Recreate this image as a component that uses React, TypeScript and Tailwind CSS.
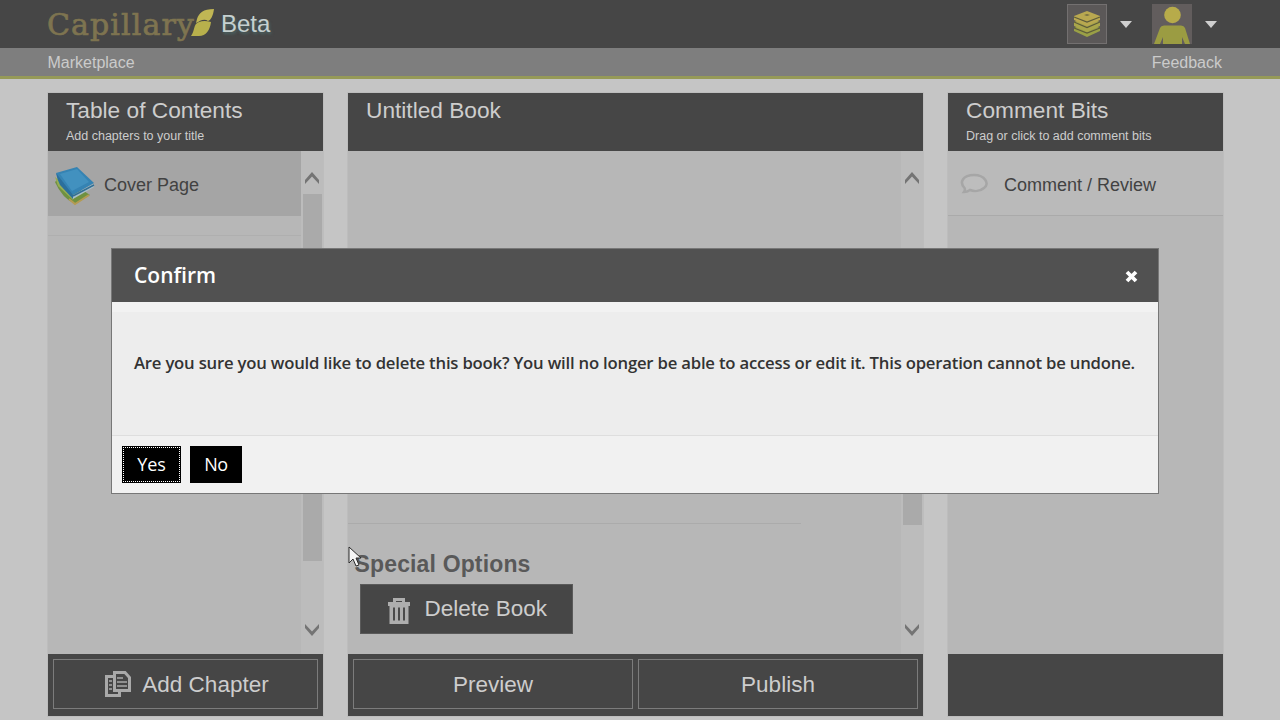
import type { ReactNode } from 'react';

type PanelProps = {
  title: string;
  subtitle?: string;
  width: string;
  children?: ReactNode;
  footer?: ReactNode;
};

function Panel({ title, subtitle, width, children, footer }: PanelProps) {
  return (
    <section className={`flex h-[623px] shrink-0 flex-col shadow-[0_0_0_1px_#bdbdbd] ${width}`}>
      <header className="h-[58px] shrink-0 bg-[#464646] pl-[18px] pt-[4px] text-[#cdcdcd]">
        <h2 className="text-[22.7px] leading-[27px]">{title}</h2>
        {subtitle && <p className="pt-[3px] text-[12.5px] leading-[18px]">{subtitle}</p>}
      </header>
      <div className="flex min-h-0 flex-1 bg-[#b7b7b7]">{children}</div>
      <footer className="flex h-[62px] shrink-0 gap-[5px] bg-[#464646] px-[5px] pb-[7px] pt-[5px]">{footer}</footer>
    </section>
  );
}

function FooterButton({ children }: { children: ReactNode }) {
  return (
    <button className="flex flex-1 items-center justify-center border border-[#7c7c7c] pt-[2px] text-[22.5px] leading-none text-[#cdcdcd]">
      {children}
    </button>
  );
}

function Chevron({ down = false }: { down?: boolean }) {
  return (
    <svg width="16" height="13" viewBox="0 0 16 13" className={down ? 'rotate-180' : ''}>
      <path d="M1 9 8 1l7 8v4L8 5.500 1 13Z" fill="#747474" />
    </svg>
  );
}

function Scrollbar({ thumb }: { thumb: string }) {
  return (
    <div className="flex w-[22px] shrink-0 flex-col items-center bg-[#bcbcbc] pb-[17px] pt-[20px]">
      <Chevron />
      <div className={`w-[19px] bg-[#aaaaaa] ${thumb}`} />
      <div className="flex-1" />
      <Chevron down />
    </div>
  );
}

function Caret() {
  return (
    <svg width="12" height="7" viewBox="0 0 12 7">
      <path d="M0 0h12L6 7Z" fill="#cfcfcf" />
    </svg>
  );
}

function Leaf() {
  return (
    <svg width="24" height="28" viewBox="0 0 24 28" className="ml-[-5px]">
      <path d="M6 10C8 4 12 0 23 0 22 7 20 11 17 12 13 9 9 12 5 14Z" fill="#c0b654" />
      <path d="M0 27C4 22 2 15 8 13q5-2 12 0c-1 8-5 14-12 14Z" fill="#b8b04c" />
    </svg>
  );
}

function StackIcon() {
  return (
    <svg width="28" height="28" viewBox="0 0 28 28">
      <path d="M1 18 14 13l13 5v3L14 27 1 21Z" fill="#9aa046" />
      <path d="m1 18 13 5 13-5" fill="none" stroke="#5d5b3b" strokeWidth="1.3" />
      <path d="M1 12 14 7l13 5v4l-13 6-13-6Z" fill="#a9a64b" />
      <path d="m1 12 13 5.500 13-5.500" fill="none" stroke="#5d5b3b" strokeWidth="1.3" />
      <path d="M1 6 14 1l13 5v4l-13 6-13-6Z" fill="#b9a850" />
      <path d="m1 7 13 5 13-5" fill="none" stroke="#5d5b3b" strokeWidth="1.3" />
      <path d="m11 5 3-1 3 1-3 1Z" fill="#756d42" />
    </svg>
  );
}

function PersonIcon() {
  return (
    <svg width="40" height="40" viewBox="0 0 40 40">
      <circle cx="20.500" cy="11" r="8.300" fill="#b7ab4a" />
      <path d="M2 40 8 24q1-2.500 4-2.500h17q3 0 4 2.500l5 16h-5l-3-7v7H11v-7l-3 7Z" fill="#9b9c42" />
    </svg>
  );
}

function BooksIcon() {
  return (
    <svg width="42" height="40" viewBox="0 0 42 40" className="mt-[2px]">
      <path d="m1 16 6-6 29 19-15 9Q8 32 1 16Z" fill="#6f9140" />
      <path d="m15 33 6 5 14-9" fill="none" stroke="#b49b52" strokeWidth="2" />
      <path d="m1 11 3 9 15 14 2-7Z" fill="#95ad55" />
      <path d="m17 30 22-12 1 3-21 12Z" fill="#a9bfc9" />
      <path d="M2 7 23 1l17 16-21 12Q7 22 2 7Z" fill="#3583b3" />
      <path d="M2 7q1 6 4 12l13 14v-4Z" fill="#2b6f9c" />
      <path d="m6 8 17-5 12 13-17 9Z" fill="#4291bf" />
      <path d="m19 30 21-11" stroke="#336f94" strokeWidth="1.500" />
    </svg>
  );
}

function TrashIcon() {
  return (
    <svg width="22" height="28" viewBox="0 0 22 28" className="mt-[3px]">
      <path d="M6.500 6V2.500h9V6" fill="none" stroke="#aeaeae" strokeWidth="3" />
      <path d="M0 5h22v4H0Z" fill="#aeaeae" />
      <path d="M1.500 8h19v19h-19Z" fill="#aeaeae" />
      <path d="M6 10.500v13M11 10.500v13M16 10.500v13" stroke="#4b4b4b" strokeWidth="2" />
    </svg>
  );
}

function CopyIcon() {
  return (
    <svg width="26" height="26" viewBox="0 0 26 26" fill="none" stroke="#a9a9a9" className="ml-[3px] mt-[-2px]">
      <path d="M8 5.500H1.500v19h13V21" strokeWidth="3" />
      <path d="M9.500 1.500H20l4.500 5v13h-15Z" strokeWidth="3" fill="#464646" />
      <path d="M12 7h6M12 11h10M12 15h10M4 10h3M4 14h3M4 18h3" strokeWidth="1.700" />
    </svg>
  );
}

function BubbleIcon() {
  return (
    <svg width="28" height="21" viewBox="0 0 28 21" className="mt-[-3px]">
      <path
        d="M4.500 15C-1 9 3 2 14 2s16 9 10 13c-4 3.500-10 3.500-14 2-2 1.500-4 2-6 2Q5.500 17 4.500 15Z"
        fill="#bdbdbd"
        stroke="#a6a6a6"
        strokeWidth="2.500"
      />
    </svg>
  );
}

function TopBar() {
  return (
    <header className="flex h-12 items-start justify-between bg-[#464646] pl-[47px] pr-[63px] pt-1">
      <div className="flex pt-[5px]">
        <span className="mt-[-2px] w-[149px] whitespace-nowrap font-['DejaVu_Serif',serif] text-[30px] leading-[36px] tracking-[1.1px] text-[#7e7450] [-webkit-text-stroke:0.7px_#7e7450]">
          Capillary
        </span>
        <Leaf />
        <span className="ml-[6px] mt-[1px] text-[24px] leading-[28px] text-[#c5d0d0] [text-shadow:1px_2px_3px_#4b6666]">Beta</span>
      </div>
      <div className="flex items-center">
        <div className="flex size-10 items-center justify-center border border-[#737070] bg-[#5b5858]">
          <StackIcon />
        </div>
        <div className="ml-[13px] mr-5">
          <Caret />
        </div>
        <div className="size-10 bg-[#625d5d]">
          <PersonIcon />
        </div>
        <div className="ml-[13px]">
          <Caret />
        </div>
      </div>
    </header>
  );
}

function ConfirmDialog() {
  return (
    <div className="absolute left-[111px] top-[248px] flex h-[246px] w-[1048px] flex-col border border-[#777777] bg-[#ededed] font-['Trebuchet_MS','Open_Sans',sans-serif]">
      <header className="flex h-[53px] shrink-0 items-center justify-between bg-[#515151] pl-[22px] pr-[20px] text-white">
        <h1 className="text-[21px] font-semibold leading-none">Confirm</h1>
        <svg width="13" height="13" viewBox="0 0 13 13" className="mt-[2px]">
          <path d="m2 2 9 9m0-9-9 9" stroke="#ffffff" strokeWidth="3.800" />
        </svg>
      </header>
      <div className="flex-1 border-t-[10px] border-[#f2f2f2] pl-[22px] pt-[38px]">
        <p className="whitespace-nowrap text-[16.7px] font-semibold leading-[26px] tracking-[-0.2px] text-[#333333]">
          Are you sure you would like to delete this book? You will no longer be able to access or edit it. This operation
          cannot be undone.
        </p>
      </div>
      <footer className="flex h-[58px] shrink-0 items-start gap-[9px] border-t border-[#dedede] bg-[#f1f1f1] pl-[10px] pt-[10px] text-[18px] text-white">
        <button className="h-[37px] w-[59px] bg-black p-px">
          <span className="flex h-full items-center justify-center border border-dotted border-white">Yes</span>
        </button>
        <button className="h-[37px] w-[52px] bg-black tracking-[-0.4px]">No</button>
      </footer>
    </div>
  );
}

export default function App() {
  return (
    <div className="relative h-[720px] w-[1280px] overflow-hidden bg-[#c5c5c5] font-['Liberation_Sans',Arial,sans-serif]">
      <TopBar />
      <nav className="flex h-[31px] justify-between border-b-[3px] border-[#969a58] bg-[#7e7e7e] pl-[47.5px] pr-[58px] text-base leading-[29px] text-[#cbcbcb]">
        <span>Marketplace</span>
        <span>Feedback</span>
      </nav>

      <main className="flex gap-[25px] pl-12 pt-[14px]">
        <Panel
          title="Table of Contents"
          subtitle="Add chapters to your title"
          width="w-[275px]"
          footer={
            <FooterButton>
              <CopyIcon />
              <span className="ml-[11px]">Add Chapter</span>
            </FooterButton>
          }
        >
          <div className="flex-1">
            <div className="flex h-[65px] items-center bg-[#a5a5a5] pl-[6px] pt-[3px]">
              <BooksIcon />
              <span className="ml-2 text-lg text-[#424242]">Cover Page</span>
            </div>
            <div className="h-5 border-b border-[#afafaf]" />
          </div>
          <Scrollbar thumb="mt-[10px] h-[367px]" />
        </Panel>

        <Panel
          title="Untitled Book"
          width="w-[575px]"
          footer={
            <>
              <FooterButton>Preview</FooterButton>
              <FooterButton>Publish</FooterButton>
            </>
          }
        >
          <div className="flex flex-1 flex-col justify-end pb-5">
            <div className="mr-[100px] border-t border-[#ababab]" />
            <h3 className="pl-[6.5px] pt-[26px] text-[23px] font-bold leading-[28px] tracking-[0.15px] text-[#595959]">
              Special Options
            </h3>
            <button className="ml-3 mt-[6px] flex h-[50px] w-[213px] items-center border border-[#5a5a5a] bg-[#464646] pl-[27px] text-[22.5px] leading-none text-[#cdcdcd]">
              <TrashIcon />
              <span className="ml-[14.5px]">Delete Book</span>
            </button>
          </div>
          <Scrollbar thumb="mt-[120px] h-[221px]" />
        </Panel>

        <Panel title="Comment Bits" subtitle="Drag or click to add comment bits" width="w-[275px]">
          <div className="flex h-[65px] flex-1 items-center border-b border-[#aaaaaa] bg-[#bababa] pl-3 pt-[3px]">
            <BubbleIcon />
            <span className="ml-4 text-lg text-[#424242]">Comment / Review</span>
          </div>
        </Panel>
      </main>

      <ConfirmDialog />

      <svg width="13" height="21" viewBox="0 0 13 21" className="absolute left-[348px] top-[546px]">
        <path d="M1 1v16l4-4 3 7 3-1-3-7h5Z" fill="#f5f5f5" stroke="#2c2c2c" />
      </svg>
    </div>
  );
}
